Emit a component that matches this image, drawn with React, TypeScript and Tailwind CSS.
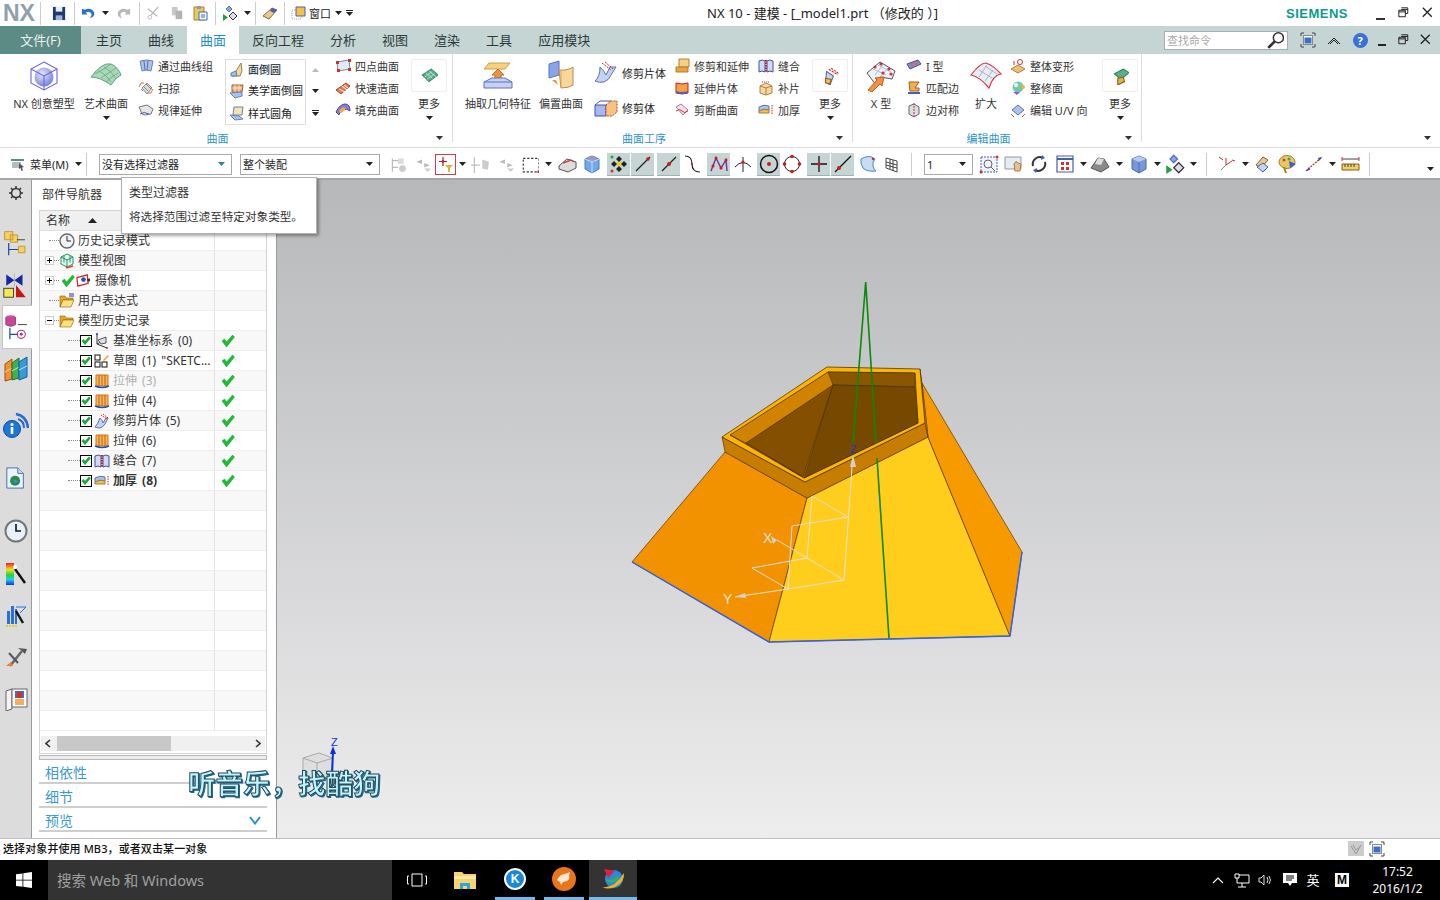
import React from "react";

const S = ({ s = 16, v = 16, children }: { s?: number; v?: number; children?: React.ReactNode }) => (
  <svg width={s} height={s} viewBox={`0 0 ${v} ${v}`} className="shrink-0 block">{children}</svg>
);
const Arrow = ({ c = "#222" }: { c?: string }) => (
  <svg width="7" height="4" viewBox="0 0 7 4" className="shrink-0 block"><path d="M0 0h7L3.5 4z" fill={c} /></svg>
);

/* ---------- icons ---------- */
const Creative = () => (
  <S s={32} v={32}>
    <defs><radialGradient id="sph" cx="40%" cy="35%" r="70%"><stop offset="0" stopColor="#e4e8fb" /><stop offset="1" stopColor="#6f7fd6" /></radialGradient></defs>
    <circle cx="16" cy="17" r="9.5" fill="url(#sph)" />
    <path d="M16 2l13 7v14l-13 7-13-7V9zM3 9l13 7 13-7M16 16v14" fill="none" stroke="#6f62e8" strokeWidth="1.1" />
  </S>
);
const Art = () => (
  <S s={32} v={32}>
    <path d="M1 17Q12 2 21 4q7 3 10 11-5 2-10 10Q10 17 1 17z" fill="#a8d8b8" stroke="#5f9f7f" />
    <path d="M8 11q7 2 13 11M14 7q7 3 12 12M5 14q10-5 16-10M11 18q9-6 15-10M16 22q6-6 12-9" fill="none" stroke="#5f9f7f" strokeWidth=".7" />
  </S>
);
const Sheets = () => (<S><path d="M2 3q7-2 13 0l-2 10q-5-2-9 0z" fill="#a9c4ec" stroke="#6b7fb8" /><path d="M6 3l1 9M10 2.5l-1 10" stroke="#5a6fb0" fill="none" /></S>);
const Sweep = () => (<S><path d="M4 8l5-5 5 5-5 6z" fill="#ddd" stroke="#888" /><path d="M5 6l5 5M8 4l5 5M3 9l2 2" stroke="#888" /><path d="M1 7l2-4 3 0M15 9l-2 4-3 0" stroke="#e8703a" fill="none" /></S>);
const Law = () => (<S><path d="M1 5l8-2 6 4-2 5-6 1-3-1z" fill="#e6e6e6" stroke="#777" /><path d="M2 12q4-3 9 0" stroke="#4060b0" fill="none" /></S>);
const Fold = () => (<S><path d="M12 1L7 9 3 14h8l2-5z" fill="#f3d9a0" stroke="#9a7f50" /><path d="M2 11l5-2 1 5H2z" fill="#9cc0ea" stroke="#6080b0" /></S>);
const Fold2 = () => (<S><path d="M3 2h11l-1 7H3z" fill="#f0a96a" stroke="#8a6a40" /><path d="M3 5h10M6 2v7M10 2v7" stroke="#fff" strokeWidth=".7" /><path d="M1 10l12-1 0 4-7 2z" fill="#a9c4ec" stroke="#6b7fb8" /></S>);
const Fold3 = () => (<S><path d="M5 2h9l-1 8H4z" fill="#f5e3b0" stroke="#6b7fb8" /><path d="M1 10l9 1 4 3-8 1z" fill="#a9c4ec" stroke="#6b7fb8" /></S>);
const Four = () => (<S><path d="M2 4l12-2 1 9-12 2z" fill="#dcecf8" stroke="#888" /><rect x="1" y="3" width="3" height="3" fill="#d03030" /><rect x="13" y="1" width="3" height="3" fill="#d03030" /><rect x="2" y="11" width="3" height="3" fill="#d03030" /><rect x="13" y="10" width="3" height="3" fill="#d03030" /></S>);
const Studio = () => (<S><path d="M1 10L11 3l4 3-9 8z" fill="#ea7a4a" stroke="#a04a2a" /><path d="M4 9l6 3M7 6l5 4M9 5l4 3" stroke="#fff" /></S>);
const FillS = () => (<S><path d="M1 10Q5 2 10 2t5 7q-3-3-7-1t-4 5z" fill="#8d7ad8" stroke="#504090" /><path d="M4 9q3-5 7-3l-2 3-3 2z" fill="#f0b040" /></S>);
const MoreG = () => (<S s={18}><path d="M2 7l8-5 6 5-8 6z" fill="#58b088" stroke="#3a8a68" /><path d="M5 5l6 5M8 3.5l6 5M4 9l7-5M6 11l7-5" stroke="#c8eadb" strokeWidth=".7" /></S>);
const Extract = () => (
  <S s={32} v={32}>
    <path d="M7 3h21l-5 6H2z" fill="#f8d080" stroke="#c8a050" />
    <path d="M16 9l6 6h-3v5h-6v-5h-3z" fill="#f09040" stroke="#c07020" />
    <path d="M2 22l8-4h13l7 4v6H2z" fill="#c4d2f4" stroke="#6070c0" /><path d="M2 22h28" stroke="#6070c0" />
  </S>
);
const Offset = () => (
  <S s={32} v={32}>
    <path d="M4 4l10-3v14l-10 3z" fill="#8aa4ea" stroke="#5a70c0" />
    <path d="M14 10h6q6-1 8-3v18q-4 3-12 3z" fill="#f8d898" stroke="#c08850" />
    <path d="M16 11v17" stroke="#e8a050" /><path d="M7 20l6 5-2-5z" fill="#f09040" />
  </S>
);
const TrimSheet = () => (<S s={24} v={24}><path d="M6 6q5 5 6 8l4-8 6 0-5 8q-2 5-7 7-5 1-9-1 5-4 5-14z" fill="#c4d2f4" stroke="#6070a8" /><path d="M8 2l9 7M11 1l8 7" stroke="#e02020" strokeDasharray="2 1" /></S>);
const TrimBody = () => (<S s={24} v={24}><path d="M1 9h11v11H1z" fill="#a8b8ec" stroke="#4050b8" /><path d="M12 9l5-4h6v11l-5 4h-6z" fill="#f4c480" stroke="#c04030" strokeDasharray="2 1" /><path d="M1 9l5-4h11" fill="none" stroke="#4050b8" /></S>);
const TrimExt = () => (<S><path d="M5 1h10v8H5z" fill="#f8d080" stroke="#b08030" /><path d="M2 9h12v5H2z" fill="#f0a040" stroke="#b08030" /></S>);
const ExtSheet = () => (<S><path d="M2 3q6 2 12 0v10q-6 2-12 0z" fill="#f8a040" stroke="#c02020" /><path d="M2 11q6 2 12 0v2q-6 2-12 0z" fill="#5060c0" /></S>);
const Divide = () => (<S><path d="M2 5l5-3 7 6-5 5z" fill="#f0e0f0" stroke="#a080b0" /><path d="M2 9q4-3 6 0t6 0" stroke="#e03030" fill="none" /></S>);
const Sew = () => (<S><path d="M1 3q4-2 6 0v11q-3-2-6 0zM15 3q-4-2-6 0v11q3-2 6 0z" fill="#cddcf4" stroke="#405098" /><path d="M8 2v12" stroke="#d02020" strokeDasharray="1.5 1" strokeWidth="2" /></S>);
const Patch = () => (<S><path d="M2 6l6-3 6 3v7l-6 2-6-2z" fill="#f8d8a0" stroke="#b08040" /><path d="M2 6l6 2 6-2M8 8v7" stroke="#b08040" fill="none" /><path d="M4 2l8 0" stroke="#d03030" strokeDasharray="1 1" /></S>);
const Thick = () => (<S><path d="M1 5q5-3 10-1v4q-5-2-10 1z" fill="#a9c4ec" stroke="#6070b0" /><path d="M1 9q5-3 10-1v3H1z" fill="#f0c050" stroke="#a08030" /><path d="M14 3v10" stroke="#d02020" strokeDasharray="1.5 1" /></S>);
const MoreTrim = () => (<S s={18}><path d="M5 4l6 4-3 8-4-3z" fill="#c4d2f4" stroke="#6070a8" /><path d="M7 2l8 5M9 1l7 5" stroke="#e02020" strokeDasharray="2 1" /><path d="M4 10l5 1-1 4-4-1z" fill="#f0c050" stroke="#906020" /></S>);
const XForm = () => (
  <S s={32} v={32}>
    <path d="M2 13l13-11 15 9-3 8-12-2-4 8z" fill="#eef2f6" stroke="#555" />
    <path d="M8 9l13 6M13 5l13 7M10 15l8-10M16 16l7-8" stroke="#a8c0d8" />
    <g fill="#d03040"><circle cx="10" cy="7" r="1.6" /><circle cx="16" cy="4" r="1.6" /><circle cx="24" cy="9" r="1.6" /><circle cx="18" cy="13" r="1.6" /><circle cx="26" cy="14" r="1.6" /></g>
    <path d="M3 30l9-10-2-2 9-1-2 9-2-2-8 8z" fill="#f09040" stroke="#c06020" />
  </S>
);
const IForm = () => (<S><path d="M1 6l11-4 3 4-11 5z" fill="#8090d8" stroke="#405098" /><rect x="5" y="5" width="2.5" height="3" fill="#e06060" /><rect x="9" y="4" width="2.5" height="3" fill="#e06060" /></S>);
const MatchE = () => (<S><path d="M3 2h10l-4 6 4 0v3H4z" fill="#f0b050" stroke="#a06020" /><path d="M2 13h12" stroke="#4060c0" strokeWidth="2" /></S>);
const Sym = () => (<S><path d="M3 4l5-2 5 3v7l-5 3-5-3z" fill="#ddd" stroke="#666" /><path d="M8 1v14" stroke="#b03060" strokeDasharray="2 1" /></S>);
const Enlarge = () => (
  <S s={32} v={32}>
    <path d="M1 15Q10 3 16 3q8 3 15 11-8 1-12 14Q10 17 1 15z" fill="#eaeef4" stroke="#d04050" strokeWidth="1.2" />
    <path d="M9 10l13 8M15 6l12 8M9 17l8-12M15 21l8-11" stroke="#a8b4c8" fill="none" />
  </S>
);
const Global = () => (<S><path d="M1 11l7-4 7 4-7 4z" fill="#f0c070" stroke="#b08040" /><circle cx="10" cy="4" r="2.5" fill="none" stroke="#d03030" /><path d="M4 7V3" stroke="#d03030" /></S>);
const Refit = () => (<S><circle cx="8" cy="7" r="5.5" fill="#70c8a8" /><circle cx="6" cy="5" r="2.2" fill="#e0f0e8" /><path d="M3 12l4 3 3-3z" fill="#a050c8" /><circle cx="13" cy="7" r="2" fill="#f0b030" /></S>);
const UV = () => (<S><path d="M2 8l6-5 6 5-6 5z" fill="#a9c4ec" stroke="#6070b0" /><path d="M1 12q2 2 3 3M15 12l-3 3" stroke="#d04040" /></S>);
const MoreE = () => (<S s={18}><path d="M3 6l8-4 5 3-7 6z" fill="#58b088" stroke="#3a8060" /><path d="M6 10l5-1 1 4-6 3z" fill="#e0b040" stroke="#906020" /></S>);

const Save = () => (<S s={15}><path d="M1 1h13v14H1z" fill="#1d3a72" /><path d="M4 1h7v5H4z" fill="#e8eef8" /><path d="M4 10h7v5H4z" fill="#9fb4d8" /></S>);
const Undo = ({ c = "#2a70c8" }: { c?: string }) => (<S s={15}><path d="M1 3v6h6L5 7q4-2 6 1 1 3-2 5 6-1 5-6-3-6-10-3z" fill={c} /></S>);
const Redo = () => (<S s={15}><g transform="matrix(-1 0 0 1 15 0)"><path d="M1 3v6h6L5 7q4-2 6 1 1 3-2 5 6-1 5-6-3-6-10-3z" fill="#b8b8b8" /></g></S>);
const Cut = () => (<S s={15}><path d="M13 1L5 10M2 3l10 8" stroke="#b8b8b8" strokeWidth="1.4" fill="none" /><circle cx="4" cy="12" r="2" fill="none" stroke="#b8b8b8" /></S>);
const Copy = () => (<S s={15}><path d="M2 1h6v9H2z" fill="#c8c8c8" /><path d="M6 5h7v9H6z" fill="#b4b4b4" /></S>);
const Paste = () => (<S s={16}><path d="M2 2h10v13H2z" fill="#e8c860" stroke="#a08830" /><path d="M5 1h4v3H5z" fill="#999" /><path d="M7 7h8v8H7z" fill="#f4f6fa" stroke="#4070b0" /><path d="M9 10h4M9 12h4" stroke="#4070b0" /></S>);
const Diamonds = ({ s = 16 }: { s?: number }) => (<S s={s}><path d="M7 1l3 3-3 3-3-3z" fill="#8aa4ea" stroke="#5070c0" /><path d="M11 7l4 4-4 4-4-4z" fill="#dde" stroke="#333" /><path d="M1 9l5 3.5-5 3.5z" fill="#20a040" /></S>);
const Crayon = () => (<S s={16}><path d="M1 11l9-8 5 2-8 9z" fill="#e8c890" stroke="#8a6a30" /><path d="M10 3l5 2-3 3-4-2z" fill="#5060b0" /></S>);
const Windowi = () => (<S s={16}><path d="M1 5h9v9H1z" fill="none" stroke="#aaa" strokeDasharray="1 1" /><path d="M5 2h9v9H5z" fill="#f8c040" stroke="#4060c0" /></S>);

const MenuI = () => (<S><path d="M1 3h13v2H1z" fill="#5a8a8a" /><path d="M2 7h9M2 9h7M2 11h7" stroke="#6a7a80" /><path d="M9 7l5 4-2 .5 1 3-1.5.5-1-3-1.500 1z" fill="#555" /></S>);
const Faded1 = () => (<S s={18}><path d="M3 3v12M3 5h5M3 11h5" stroke="#bbb" fill="none" /><rect x="8" y="3" width="5" height="5" fill="#ddd" /><circle cx="12" cy="12" r="3" fill="#ccc" /></S>);
const Faded2 = () => (<S s={18}><path d="M3 6l5-2v4zM15 9l-5-2v4z" fill="#bbb" /><path d="M10 12h6l-3 3z" fill="#ccc" /></S>);
const TypeFilter = () => (<div className="w-[21px] h-[21px] border border-[#d83a4a] flex items-center justify-center"><S s={17} v={17}><path d="M6 1v9M2 5.5h8" stroke="#a02030" strokeWidth="1.2" /><circle cx="6" cy="5.500" r="1.400" fill="#d02030" /><path d="M8 9h8l-3 3v4h-2v-4z" fill="#e8b030" /></S></div>);
const Faded3 = () => (<S s={18}><path d="M3 2v14M0 9h8" stroke="#bbb" /><path d="M10 4l6 2-1 7-5-1z" fill="#ccc" /></S>);
const Dashed = () => (<S s={18}><path d="M2 3h14v12H2z" fill="none" stroke="#333" strokeDasharray="2 1.500" /><circle cx="16" cy="15" r="1.500" fill="#c03030" /></S>);
const Eraser = () => (<S s={20} v={20}><path d="M1 12l8-7 9 3v6l-8 4-9-3z" fill="#ddd" stroke="#555" /><path d="M5 9l8-3 3 2" stroke="#d04040" fill="none" strokeWidth="1.500" /></S>);
const BlueCube = () => (<S s={20} v={20}><path d="M3 5l7-3 7 3v10l-7 4-7-4z" fill="#70a8e8" stroke="#4878c0" /><path d="M3 5l7 3 7-3M10 8v11" stroke="#c8e0f8" fill="none" /><path d="M6 3h8l-3 4z" fill="none" stroke="#d88" /></S>);
const Snap1 = () => (<S s={20} v={20}><path d="M10 2l3 3-3 3-3-3zM10 12l3 3-3 3-3-3zM5 7l3 3-3 3-3-3zM15 7l3 3-3 3-3-3z" fill="#222" /><rect x="8" y="8" width="4" height="4" fill="#f0d020" /><circle cx="3" cy="3" r="1.500" fill="#20a040" /><circle cx="3" cy="17" r="1.500" fill="#d03030" /></S>);
const Line = () => (<S s={20} v={20}><path d="M3 17L17 3" stroke="#222" strokeWidth="1.200" /><circle cx="15" cy="5" r="1.800" fill="#d01818" /></S>);
const Mid = () => (<S s={20} v={20}><path d="M3 17L17 3" stroke="#222" strokeWidth="1.200" /><circle cx="10" cy="10" r="2" fill="#d01818" /></S>);
const Curve = () => (<S s={20} v={20}><path d="M3 2q7 0 7 8t8 8" stroke="#222" fill="none" strokeWidth="1.200" /><circle cx="10" cy="10" r="1" fill="#d01818" /></S>);
const Zig = () => (<S s={20} v={20}><path d="M2 17L7 4l5 10 5-8 1 11" stroke="#7030a0" fill="none" strokeWidth="1.400" /><g fill="#d01818"><circle cx="7" cy="4" r="1.500" /><circle cx="12" cy="14" r="1.500" /><circle cx="17" cy="6" r="1.500" /><circle cx="4" cy="12" r="1.500" /></g></S>);
const Arc = () => (<S s={20} v={20}><path d="M2 13q8-9 16 0M10 3v15" stroke="#222" fill="none" /><circle cx="10" cy="8" r="1.600" fill="#d01818" /></S>);
const Center = () => (<S s={20} v={20}><circle cx="10" cy="10" r="8.500" fill="none" stroke="#111" strokeWidth="1.500" /><circle cx="10" cy="10" r="2" fill="#d01818" /></S>);
const Quad = () => (<S s={20} v={20}><circle cx="10" cy="10" r="7.500" fill="none" stroke="#222" /><g fill="#d01818"><circle cx="10" cy="2.500" r="1.800" /><circle cx="10" cy="17.500" r="1.800" /><circle cx="2.500" cy="10" r="1.800" /><circle cx="17.500" cy="10" r="1.800" /></g></S>);
const Cross = () => (<S s={20} v={20}><path d="M10 2v16M2 10h16" stroke="#111" strokeWidth="1.300" /><circle cx="10" cy="10" r="1.800" fill="#d01818" /></S>);
const Tan = () => (<S s={20} v={20}><path d="M2 18L18 2" stroke="#111" strokeWidth="1.300" /><circle cx="6" cy="14" r="2" fill="#d01818" /></S>);
const Surf = () => (<S s={20} v={20}><path d="M3 5q8-5 14 0-3 3-2 7t3 5q-9 1-13-3-3-5-2-9z" fill="#c8dcf4" stroke="#5080c0" /><circle cx="15" cy="5" r="1.200" fill="#d03030" /></S>);
const Grid3 = () => (<S s={20} v={20}><path d="M4 4l11 3v11L4 14z" fill="#fff" stroke="#444" /><path d="M4 8l11 3M4 11l11 3M8 5v10M11 6v11" stroke="#444" /></S>);
const Fit = () => (<S s={20} v={20}><path d="M2 3h16v15H2z" fill="#f0f4fa" stroke="#4060b0" strokeDasharray="2 1" /><circle cx="9" cy="10" r="4" fill="none" stroke="#666" /><path d="M12 13l4 4" stroke="#666" /><circle cx="18" cy="3" r="1.500" fill="#d03030" /><circle cx="2" cy="18" r="1.500" fill="#d03030" /></S>);
const Pan = () => (<S s={20} v={20}><path d="M1 3h16v12H1z" fill="#e4ecf6" stroke="#999" /><path d="M10 10q2-4 4-1l3 1-1 7h-5z" fill="#e8c090" stroke="#a08050" /></S>);
const Rotate = () => (<S s={20} v={20}><path d="M4 12a7 7 0 0 1 10-8M16 8a7 7 0 0 1-10 8" stroke="#333" strokeWidth="2" fill="none" /><path d="M13 1l3 3-4 2z" fill="#4060c0" /><path d="M7 19l-3-3 4-2z" fill="#4060c0" /></S>);
const Views = () => (<S s={20} v={20}><path d="M2 2h16v16H2z" fill="#fff" stroke="#4060b0" strokeWidth="1.200" /><path d="M2 5h16" stroke="#4060b0" strokeWidth="2" /><g fill="#d03030"><rect x="6" y="8" width="3" height="3" /><rect x="11" y="8" width="3" height="3" /><rect x="6" y="13" width="3" height="3" /><rect x="11" y="13" width="3" height="3" /></g></S>);
const Shade = () => (<S s={20} v={20}><path d="M1 14l7-10 6 1 5 8-8 5z" fill="#8a8a8a" stroke="#555" /><path d="M8 4l6 1-3 6-6-1z" fill="#ddd" /></S>);
const Cube = () => (<S s={20} v={20}><path d="M3 5l7-3 7 3v10l-7 4-7-4z" fill="#7898d8" stroke="#4868b0" /><path d="M3 5l7 3 7-3v0l-7-3z" fill="#b4c8f0" /><path d="M10 8v11" stroke="#5070b8" /></S>);
const Triad = () => (<S s={20} v={20}><path d="M9 11l6-4M9 11V4" stroke="#c03030" fill="none" /><path d="M9 11l-5 5" stroke="#888" /><path d="M2 3l4 3M15 6l3 1" stroke="#c03030" /></S>);
const Band = () => (<S s={20} v={20}><path d="M2 11l7-8 5 3-7 8z" fill="#e8c890" stroke="#806030" /><path d="M3 13l6 5 5-5-5-4z" fill="#c8d4ec" stroke="#4060a0" /></S>);
const Palette = () => (<S s={20} v={20}><ellipse cx="9" cy="8" rx="8" ry="6.500" fill="#e8c860" stroke="#a08030" /><circle cx="6" cy="6" r="1.500" fill="#d04040" /><circle cx="11" cy="5" r="1.500" fill="#40a060" /><path d="M11 7l7 3-6 4z" fill="#4060c0" /><path d="M6 13l2 6" stroke="#a08030" strokeWidth="2" /></S>);
const Measure = () => (<S s={20} v={20}><path d="M2 17L18 3" stroke="#d03030" strokeWidth="1.400" strokeDasharray="2 1" /><path d="M2 17l4-1-1-3zM18 3l-4 1 1 3z" fill="#3050c0" /></S>);
const Ruler = () => (<S s={20} v={20}><path d="M2 10h17v6H2z" fill="#f4d060" stroke="#806020" /><path d="M5 10v3M8 10v3M11 10v3M14 10v3M2 5h17" stroke="#404040" /><path d="M2 3v4M19 3v4" stroke="#d03030" /></S>);
const Magnify = () => (<S s={18}><circle cx="11" cy="6" r="4.500" fill="#fff" stroke="#333" strokeWidth="1.300" /><path d="M8 9l-6 6" stroke="#333" strokeWidth="2.400" /></S>);
const FullWin = ({ c = "#444" }: { c?: string }) => (<S s={16}><path d="M1 4V1h3M12 1h3v3M15 12v3h-3M4 15H1v-3" stroke={c} fill="none" /><rect x="3.500" y="3.500" width="9" height="9" fill="#fff" stroke="#888" /><rect x="4.500" y="5.500" width="7" height="6" fill="#3a70c8" /></S>);
const MinI = () => <div className="w-[11px] h-[2px] bg-[#222] mt-[10px]" />;
const MaxI = () => (<S s={13}><path d="M4 1h8v7H9M1 4h8v8H1zM1 6h8M4 3h8" stroke="#222" fill="none" strokeWidth="1.200" /></S>);
const CloseI = () => (<S s={13}><path d="M1 1l11 11M12 1L1 12" stroke="#222" strokeWidth="1.600" /></S>);

const Gear = () => (<S s={16}><circle cx="8" cy="8" r="4.500" fill="none" stroke="#333" strokeWidth="1.500" /><path d="M8 1v2M8 13v2M1 8h2M13 8h2M3 3l1.500 1.500M11.500 11.500L13 13M13 3l-1.500 1.500M4.500 11.500L3 13" stroke="#333" strokeWidth="1.500" /></S>);
const AsmTree = () => (<S s={26} v={32}><path d="M2 2h10v10H2zM9 6h9v9H9z" fill="#f8d060" stroke="#b89020" /><path d="M7 16v15M7 24h12" stroke="#1848b8" strokeWidth="1.500" /><path d="M17 12h10" stroke="#222" /><path d="M19 20h8v8h-8z" fill="#f8d060" stroke="#b89020" /></S>);
const Constr = () => (<S s={26} v={32}><path d="M4 3l10 7L4 17zM24 3l-10 7 10 7z" fill="#1428a0" /><path d="M14 2v16" stroke="#aaa" /><rect x="1" y="20" width="12" height="11" fill="#f4e850" stroke="#222" /><path d="M16 31V16l12 15z" fill="#c81414" /></S>);
const PartN = () => (<S s={26} v={32}><ellipse cx="7" cy="4" rx="6" ry="2.500" fill="#d050a0" /><path d="M1 4v9q6 4 12 0V4" fill="#c84898" stroke="#803060" /><path d="M6 17v14M6 25h10" stroke="#1848b8" strokeWidth="1.500" /><path d="M16 13h11" stroke="#222" /><circle cx="20" cy="25" r="5" fill="none" stroke="#b03080" strokeWidth="1.300" /><circle cx="20" cy="25" r="1.800" fill="#b03080" /></S>);
const Books = () => (<S s={26} v={26}><path d="M2 8l7-5v20l-7 2z" fill="#f09030" stroke="#a05010" /><path d="M2 16l7-4" stroke="#ffd090" /><path d="M9 7l7-5v20l-7 2z" fill="#40b050" stroke="#207030" /><path d="M9 15l7-4" stroke="#c0f0c0" /><path d="M16 6l8-5v20l-8 3z" fill="#3a9ad8" stroke="#1060a0" /><path d="M16 14l8-4" stroke="#c0e4ff" /></S>);
const Info = () => (<S s={26} v={26}><path d="M13 2q11 2 12 14" stroke="#2a6ad0" strokeWidth="2.500" fill="none" /><path d="M15 7q6 2 6 9" stroke="#2a6ad0" strokeWidth="2" fill="none" /><circle cx="9" cy="17" r="8.500" fill="#1a78d8" stroke="#0a4ca0" /><rect x="7.700" y="15" width="2.600" height="7" fill="#fff" /><circle cx="9" cy="12.500" r="1.600" fill="#fff" /></S>);
const Doc = () => (<S s={22} v={24}><path d="M2 1h12l6 6v16H2z" fill="#eef4fc" stroke="#3a68b0" /><path d="M14 1v6h6" fill="#cfe0f4" stroke="#3a68b0" /><circle cx="11" cy="15" r="5.500" fill="#2a8a50" /><path d="M8 12q3 4 6 2 0 3-3 4z" fill="#3a90d8" /></S>);
const Clock = () => (<S s={24} v={24}><circle cx="12" cy="12" r="10.500" fill="#e8f0fa" stroke="#777" strokeWidth="2" /><path d="M12 5v7h5" stroke="#111" strokeWidth="1.600" fill="none" /></S>);
const Rainbow = () => (
  <S s={24} v={24}>
    <defs><linearGradient id="rb" x1="0" y1="0" x2="0" y2="1"><stop offset="0" stopColor="#f02020" /><stop offset=".3" stopColor="#f0e020" /><stop offset=".55" stopColor="#20d040" /><stop offset=".75" stopColor="#20d0e0" /><stop offset="1" stopColor="#1830e0" /></linearGradient></defs>
    <rect x="2" y="1" width="8" height="22" fill="url(#rb)" /><path d="M11 7l10 14" stroke="#111" strokeWidth="2.400" /><circle cx="11" cy="5" r="2" fill="#fff" />
  </S>
);
const Bars = () => (<S s={24} v={24}><path d="M3 7h3v13H3zM7 2h3v18H7zM11 5h2v15h-2z" fill="#2a70d8" /><path d="M12 3h10l-6 6" stroke="#2a70d8" fill="none" /><path d="M12 7l7 12" stroke="#111" strokeWidth="2.400" /><path d="M2 22h12" stroke="#e8d020" strokeWidth="2" strokeDasharray="2 1" /></S>);
const Tools = () => (<S s={24} v={24}><path d="M6 21L18 6" stroke="#666" strokeWidth="2.500" /><path d="M14 3l9 1-2 5-3-3z" fill="#555" /><path d="M5 8l9 10" stroke="#556" strokeWidth="2" /><path d="M2 21l5-4 2 4z" fill="#f08020" /></S>);
const Door = () => (<S s={24} v={24}><path d="M2 4l6-2v20l-6 2z" fill="#f4f4f4" stroke="#666" /><rect x="8" y="2" width="15" height="18" fill="#fff" stroke="#666" /><path d="M11 4h9v7H11z" fill="#3a70d8" /><path d="M13 5h5v6h-5z" fill="#d83020" /><path d="M11 12h9v6H11z" fill="#f0b060" /></S>);

const Tick = () => (<S s={14} v={14}><path d="M1 7l2.500-2L5.500 8 11.500 1 13.500 3 5.500 13z" fill="#18c030" stroke="#0e8a20" strokeWidth=".4" /></S>);
const Cb = () => (<div className="w-[12px] h-[12px] border border-black bg-white flex items-center justify-center shrink-0"><svg width="10" height="10" viewBox="0 0 10 10"><path d="M.5 5L2.500 3 4 5 8 .5 9.800 2.200 4 9z" fill="#18a838" /></svg></div>);
const Exp = ({ m }: { m?: boolean }) => (<div className="w-[9px] h-[9px] border border-[#ccc] bg-white flex items-center justify-center shrink-0 relative"><div className="w-[5px] h-px bg-black" />{!m && <div className="absolute w-px h-[5px] bg-black" />}</div>);
const TClock = () => (<S><circle cx="8" cy="8" r="7" fill="#f0f4f8" stroke="#666" strokeWidth="1.400" /><path d="M8 3v5h4" stroke="#222" fill="none" /></S>);
const TView = () => (<S><path d="M8 1l6 3v7l-6 3-6-3V4z" fill="#e8f8f0" stroke="#1a9a60" /><path d="M2 4l6 3 6-3M8 7v7M5 2.500v7M11 2.500v7" stroke="#1a9a60" fill="none" /><path d="M7 15l7-2" stroke="#e04020" strokeWidth="1.500" /></S>);
const TCam = () => (<S s={15}><path d="M1 5l11-3 1 9-11 3z" fill="#fff" stroke="#d82020" strokeWidth="1.300" /><circle cx="8" cy="7" r="2.500" fill="#3050b0" /><path d="M12 6h3v3h-3z" fill="#333" /></S>);
const FolderO = ({ bar }: { bar?: boolean }) => (<S><path d="M1 5V3h5l1 2h7v2H4L1 14z" fill="#e8a820" stroke="#906010" strokeWidth=".6" /><path d="M1 14l3-7h11l-3 7z" fill="#fbe080" stroke="#906010" strokeWidth=".6" />{bar && <path d="M10 1h5M10 3h5" stroke="#3030a0" />}</S>);
const TDatum = () => (<S><path d="M3 1v10l9-5M3 11l10 4" stroke="#333" fill="none" /><path d="M4 7l8-3v6l-5 1z" fill="#dde" stroke="#555" /><circle cx="3" cy="1" r="1" fill="#2040c0" /><circle cx="13" cy="15" r="1" fill="#c03030" /></S>);
const TSketch = () => (<S><rect x="1" y="2" width="5" height="5" fill="none" stroke="#111" /><rect x="1" y="9" width="5" height="5" fill="none" stroke="#111" /><rect x="8" y="9" width="5" height="5" fill="none" stroke="#111" /><path d="M9 7l5-5 1 1-5 5z" fill="#e8a030" /></S>);
const TExtrude = () => (<S><path d="M2 2h12v11H2z" fill="#f6b858" stroke="#d07010" /><path d="M5 2v11M8 2v11M11 2v11" stroke="#c06010" /><path d="M1 13q7 3 14 0" stroke="#2050c0" strokeWidth="1.400" fill="none" /></S>);
const TTrim = () => (<S><path d="M6 5q3 3 3 5l3-5 2 0-3 6q-2 3-5 4-3 0-5-1 3-3 5-9z" fill="#c4d2f4" stroke="#6070a8" /><path d="M7 2l6 4M9 1l5 4" stroke="#e02020" strokeDasharray="1.500 1" /></S>);

/* ---------- ribbon parts ---------- */
const Small = ({ i, t }: { i: React.ReactNode; t: string }) => (
  <div className="h-[22px] flex items-center gap-[4px] text-[11px] leading-none whitespace-nowrap text-[#333]">{i}<span>{t}</span></div>
);
const Col = ({ c, children }: { c: string; children?: React.ReactNode }) => <div className={`flex flex-col shrink-0 ${c}`}>{children}</div>;
const Big = ({ c, i, t, a }: { c: string; i: React.ReactNode; t: string; a?: boolean }) => (
  <div className={`flex flex-col items-center shrink-0 pt-[5px] ${c}`}>
    <div className="h-[32px] flex items-center">{i}</div>
    <div className="mt-[5px] text-[11px] leading-[14px] whitespace-nowrap text-[#333]">{t}</div>
    {a && <div className="mt-[5px]"><Arrow /></div>}
  </div>
);
const More = ({ c, i }: { c: string; i: React.ReactNode }) => (
  <div className={`w-[36px] flex flex-col items-center shrink-0 pt-[4px] ${c}`}>
    <div className="w-[36px] h-[33px] border border-[#eee] rounded-[2px] flex items-center justify-center">{i}</div>
    <div className="mt-[5px] text-[11px] leading-[14px] text-[#333]">更多</div>
    <div className="mt-[5px]"><Arrow /></div>
  </div>
);
const Group = ({ c, label, children, last }: { c: string; label: string; children?: React.ReactNode; last?: boolean }) => (
  <div className={`shrink-0 flex flex-col pt-px relative ${last ? "" : "border-r border-[#ddd] mb-[5px]"} ${c}`}>
    <div className="flex h-[76px] shrink-0">{children}</div>
    <div className="text-center pr-[17px] text-[11px] leading-[15px] text-[#2e93c8]">{label}</div>
    <div className={`absolute right-[9px] ${last ? "bottom-[7px]" : "bottom-[2px]"}`}><Arrow c="#333" /></div>
  </div>
);

/* ---------- toolbar parts ---------- */
const Cell = ({ c, on, children }: { c: string; on?: boolean; children?: React.ReactNode }) => (
  <div className={`h-[23px] flex items-center justify-center shrink-0 ${on ? "bg-[#c5d5d3] border-b border-[#9fb4b2]" : ""} ${c}`}>{children}</div>
);
const Sep = ({ c }: { c: string }) => <div className={`w-px h-[23px] bg-[#ccc] shrink-0 ${c}`} />;
const Sel = ({ c, t, ac = "#222" }: { c: string; t: string; ac?: string }) => (
  <div className={`h-[21px] border border-[#aaa] flex items-center justify-between pl-[2px] pr-[6px] text-[11px] leading-none text-[#222] shrink-0 ${c}`}>
    <span>{t}</span><Arrow c={ac} />
  </div>
);

/* ---------- tree ---------- */
type Row = { lvl: 0 | 1; exp?: "p" | "m"; tick?: boolean; i?: React.ReactNode; t?: string; done?: boolean; gray?: boolean; bold?: boolean };
const rows: Row[] = [
  { lvl: 0, i: <TClock />, t: "历史记录模式" },
  { lvl: 0, exp: "p", i: <TView />, t: "模型视图" },
  { lvl: 0, exp: "p", tick: true, i: <TCam />, t: "摄像机" },
  { lvl: 0, i: <FolderO bar />, t: "用户表达式" },
  { lvl: 0, exp: "m", i: <FolderO />, t: "模型历史记录" },
  { lvl: 1, i: <TDatum />, t: "基准坐标系 (0)", done: true },
  { lvl: 1, i: <TSketch />, t: '草图 (1) "SKETC...', done: true },
  { lvl: 1, i: <TExtrude />, t: "拉伸 (3)", done: true, gray: true },
  { lvl: 1, i: <TExtrude />, t: "拉伸 (4)", done: true },
  { lvl: 1, i: <TTrim />, t: "修剪片体 (5)", done: true },
  { lvl: 1, i: <TExtrude />, t: "拉伸 (6)", done: true },
  { lvl: 1, i: <Sew />, t: "缝合 (7)", done: true },
  { lvl: 1, i: <Thick />, t: "加厚 (8)", done: true, bold: true },
  ...Array.from({ length: 12 }, () => ({ lvl: 0 as const })),
];
const TreeRow = ({ r, n }: { r: Row; n: number }) => (
  <div className={`h-[20px] flex shrink-0 border-b border-[#eeeeee] ${n % 2 ? "bg-[#f8f8f8]" : "bg-white"}`}>
    <div className="w-[175px] shrink-0 border-r border-[#e4e4e4] flex items-center relative text-[12px] leading-none whitespace-nowrap [word-spacing:2px]">
      {r.t && r.lvl === 0 && (
        <>
          <div className="absolute left-[9px] w-[10px] border-t border-dotted border-[#888]" />
          <div className="w-[5px] shrink-0" />
          <div className="w-[9px] shrink-0 relative z-10">{r.exp && <Exp m={r.exp === "m"} />}</div>
          {r.tick ? <div className="ml-[7px] mr-[1px]"><Tick /></div> : <div className="w-[5px]" />}
          {r.i}
          <span className={`text-[#333] ${r.tick ? "ml-[4px]" : "ml-[3px]"}`}>{r.t}</span>
        </>
      )}
      {r.t && r.lvl === 1 && (
        <>
          <div className="absolute left-[28px] w-[12px] border-t border-dotted border-[#888]" />
          <div className="w-[40px] shrink-0" />
          <Cb />
          <div className="ml-[2px]">{r.i}</div>
          <span className={`ml-[3px] ${r.gray ? "text-[#b0b0b0]" : "text-[#333]"} ${r.bold ? "font-bold" : ""}`}>{r.t}</span>
        </>
      )}
    </div>
    <div className="flex-1 flex items-center pl-[6px]">{r.done && <Tick />}</div>
  </div>
);

/* ---------- 3D view ---------- */
const Model = () => (
  <svg viewBox="277 180 1163 658" className="block w-full h-full">
    <polygon points="632,562 725,452 807,498 769,642" fill="#f39200" stroke="#5a3a00" strokeWidth=".7" />
    <polygon points="807,498 928,437 1010,636 769,642" fill="#ffcd1c" stroke="#5a3a00" strokeWidth=".7" />
    <polygon points="922,383 1022,552 1010,636 928,437" fill="#f79a00" stroke="#5a3a00" strokeWidth=".7" />
    <polygon points="722,437 805,482 925,423 928,437 807,498 725,452" fill="#c77e00" stroke="#4a3000" strokeWidth=".6" />
    <polygon points="920,369 925,423 928,437 922,383" fill="#d48a00" stroke="#4a3000" strokeWidth=".5" />
    <polygon points="722,437 827,367 920,369 925,423 805,482" fill="#ffb400" stroke="#3a2800" strokeWidth=".7" />
    <polygon points="730,435 828,372 915,373 918,423 804,478" fill="#d08300" stroke="#3a2800" strokeWidth=".7" />
    <polygon points="828,372 915,373 915,387 833,385" fill="#8a5600" stroke="#3a2800" strokeWidth=".5" />
    <polygon points="746,443 833,385 803,477" fill="#845000" stroke="#3a2800" strokeWidth=".6" />
    <polygon points="833,385 915,387 918,423 804,478" fill="#774900" stroke="#3a2800" strokeWidth=".6" />
    <path d="M730 435L746 443L803 477" stroke="#3a2800" strokeWidth=".5" fill="none" />
    <path d="M853 443L865.700 282L876 443M877 458L889 638" stroke="#0a8a0a" strokeWidth="1.600" fill="none" />
    <path d="M632 562L769 642L1010 636L1022 552" stroke="#3060f0" strokeWidth="1.400" fill="none" />
    <g stroke="#e2e0da" strokeWidth="1" fill="none">
      <path d="M812 496L848 517L792 526L788 589L844 580L852 467M812 496L807 558M752 568L807 558L844 580M752 568L788 589M807 558L777 540M788 589L735 597" />
    </g>
    <path d="M853 455l-3 12h6zM777 540l-6 -4 2 8zM735 597l10-4 1 5z" fill="#d0d0d0" />
    <text x="763" y="543" fontSize="14" fill="#e4e2da" fontFamily="Liberation Sans">X</text>
    <text x="723" y="604" fontSize="14" fill="#e4e2da" fontFamily="Liberation Sans">Y</text>
    <text x="850" y="453" fontSize="11" fill="#2030e0" fontFamily="Liberation Sans">Z</text>
    <path d="M303 758l16-5 14 5v18l-14 3-16-3z" fill="#d8d8d8" fillOpacity=".6" stroke="#aaa" />
    <path d="M303 758l14 5 16-5M317 763v15" stroke="#aaa" fill="none" />
    <path d="M332 772L333 752" stroke="#1030e0" strokeWidth="2" />
    <path d="M333 746l-3 8h6z" fill="#1030e0" />
    <path d="M318 778l16 1" stroke="#20a030" strokeWidth="1.400" />
    <text x="331" y="746" fontSize="11" fill="#1030e0" fontFamily="Liberation Sans">Z</text>
  </svg>
);

export default function App() {
  return (
    <div className="w-[1440px] h-[900px] overflow-hidden flex flex-col bg-white relative [font-family:'Noto_Sans','Noto_Sans_CJK_SC',sans-serif] text-[#222]">
      {/* title bar */}
      <div className="h-[26px] flex items-center shrink-0">
        <div className="w-[707px] shrink-0 flex items-center">
          <span className="w-[45px] pl-[3px] text-[23px] font-bold leading-none text-[#8fa0ac] [font-family:'Liberation_Sans',sans-serif]">NX</span>
          <Sep c="h-[18px] -ml-[5px] mr-[11px]" />
          <Save />
          <Sep c="h-[18px] ml-[7px] mr-[6px]" />
          <Undo />
          <div className="ml-[6px] mr-[8px]"><Arrow /></div>
          <Redo />
          <Sep c="h-[18px] ml-[7px] mr-[6px]" />
          <Cut />
          <div className="ml-[9px]"><Copy /></div>
          <div className="ml-[7px]"><Paste /></div>
          <Sep c="h-[18px] ml-[7px] mr-[6px]" />
          <Diamonds />
          <div className="ml-[6px]"><Arrow /></div>
          <Sep c="h-[18px] ml-[4px] mr-[6px]" />
          <Crayon />
          <Sep c="h-[18px] ml-[6px] mr-[6px]" />
          <Windowi />
          <span className="ml-[2px] text-[11px] leading-none">窗口</span>
          <div className="ml-[4px]"><Arrow /></div>
          <div className="ml-[4px]"><svg width="7" height="6" viewBox="0 0 7 6" className="block"><path d="M0 0h7v1H0zM0 2h7L3.500 6z" fill="#222" /></svg></div>
        </div>
        <div className="text-[13px] leading-none whitespace-nowrap text-[#222]">NX 10 - 建模 - [_model1.prt （修改的 ）]</div>
        <div className="ml-auto flex items-center">
          <span className="text-[13px] font-bold tracking-[0.5px] leading-none text-[#0d9a8c] [font-family:'Liberation_Sans',sans-serif] mr-[20px]">SIEMENS</span>
          <div className="w-[24px] flex justify-center h-[13px]"><div className="w-[9px] h-[2px] bg-[#333] mt-[11px]" /></div>
          <div className="w-[24px] flex justify-center"><MaxI /></div>
          <div className="w-[24px] flex justify-center"><CloseI /></div>
        </div>
      </div>

      {/* tab bar */}
      <div className="h-[28px] bg-[#c5d5d3] flex items-stretch shrink-0">
        <div className="w-[81px] bg-[#5c8a84] text-[#e8f2f0] text-[13px] leading-none flex items-center justify-center mr-[2px]">文件(F)</div>
        {["主页", "曲线", "曲面", "反向工程", "分析", "视图", "渲染", "工具", "应用模块"].map((t) => (
          <div key={t} className={`px-[13px] text-[13px] leading-none flex items-center ${t === "曲面" ? "bg-white text-[#2390c8]" : "text-[#2c3a3a]"}`}>{t}</div>
        ))}
        <div className="ml-auto flex items-center pr-[10px]">
          <div className="w-[124px] h-[19px] bg-white border border-[#aab] flex items-center justify-between pl-[2px] pr-[3px] text-[11px] leading-none text-[#aaa]">
            <span>查找命令</span><Magnify />
          </div>
          <div className="w-[38px] flex justify-center pl-[2px]"><FullWin /></div>
          <div className="w-[16px] flex justify-center"><svg width="14" height="9" viewBox="0 0 14 9" className="block"><path d="M1 8l6-6 6 6M3 8l4-4 4 4" stroke="#222" fill="none" /></svg></div>
          <div className="w-[36px] flex justify-center"><div className="w-[15px] h-[15px] rounded-full bg-[#3a70d8] text-white text-[11px] font-bold leading-[15px] text-center">?</div></div>
          <div className="w-[8px] flex justify-center h-[13px]"><MinI /></div>
          <div className="w-[36px] flex justify-center"><MaxI /></div>
          <div className="w-[8px] flex justify-center"><CloseI /></div>
        </div>
      </div>

      {/* ribbon */}
      <div className="h-[94px] shrink-0 flex border-b border-[#dcdcdc] relative">
        <Group c="w-[453px]" label="曲面">
          <Big c="w-[88px]" i={<Creative />} t="NX 创意塑型" />
          <Big c="w-[36px]" i={<Art />} t="艺术曲面" a />
          <Col c="ml-[14px] w-[87px]"><Small i={<Sheets />} t="通过曲线组" /><Small i={<Sweep />} t="扫掠" /><Small i={<Law />} t="规律延伸" /></Col>
          <div className="mt-[4px] h-[66px] w-[81px] shrink-0 border border-[#ddd] pl-[3px] flex flex-col">
            <div className="h-[19px] flex items-center gap-[3px] text-[11px] leading-none whitespace-nowrap"><Fold /><span className="bg-[#e6f2fb]">面倒圆</span></div>
            <div className="h-[23px] flex items-center gap-[3px] text-[11px] leading-none whitespace-nowrap"><Fold2 /><span>美学面倒圆</span></div>
            <div className="h-[22px] flex items-center gap-[3px] text-[11px] leading-none whitespace-nowrap"><Fold3 /><span>样式圆角</span></div>
          </div>
          <div className="w-[18px] mt-[4px] h-[66px] flex flex-col items-center justify-around pl-[1px] shrink-0">
            <svg width="7" height="4" viewBox="0 0 7 4" className="block"><path d="M0 4h7L3.500 0z" fill="#bbb" /></svg>
            <Arrow />
            <svg width="7" height="6" viewBox="0 0 7 6" className="block"><path d="M0 0h7v1H0zM0 2h7L3.500 6z" fill="#222" /></svg>
          </div>
          <Col c="ml-[11px] w-[76px]"><Small i={<Four />} t="四点曲面" /><Small i={<Studio />} t="快速造面" /><Small i={<FillS />} t="填充曲面" /></Col>
          <More c="" i={<MoreG />} />
        </Group>
        <Group c="w-[400px]" label="曲面工序">
          <Big c="w-[66px] ml-[12px]" i={<Extract />} t="抽取几何特征" />
          <Big c="w-[44px] ml-[8px]" i={<Offset />} t="偏置曲面" />
          <Col c="ml-[11px] w-[71px]">
            <div className="h-[36px] flex items-center gap-[4px] text-[11px] leading-none whitespace-nowrap"><TrimSheet /><span>修剪片体</span></div>
            <div className="h-[34px] flex items-center gap-[4px] text-[11px] leading-none whitespace-nowrap"><TrimBody /><span>修剪体</span></div>
          </Col>
          <Col c="ml-[9px] w-[84px]"><Small i={<TrimExt />} t="修剪和延伸" /><Small i={<ExtSheet />} t="延伸片体" /><Small i={<Divide />} t="剪断曲面" /></Col>
          <Col c="w-[54px]"><Small i={<Sew />} t="缝合" /><Small i={<Patch />} t="补片" /><Small i={<Thick />} t="加厚" /></Col>
          <More c="" i={<MoreTrim />} />
        </Group>
        <Group c="w-[289px]" label="编辑曲面">
          <Big c="w-[32px] ml-[12px]" i={<XForm />} t="X 型" />
          <Col c="ml-[9px] w-[64px]"><Small i={<IForm />} t="I 型" /><Small i={<MatchE />} t="匹配边" /><Small i={<Sym />} t="边对称" /></Col>
          <Big c="w-[32px]" i={<Enlarge />} t="扩大" />
          <Col c="ml-[8px] w-[92px]"><Small i={<Global />} t="整体变形" /><Small i={<Refit />} t="整修面" /><Small i={<UV />} t="编辑 U/V 向" /></Col>
          <More c="" i={<MoreE />} />
        </Group>
        <Group c="flex-1" label="" last />
      </div>

      {/* toolbar */}
      <div className="h-[32px] pt-[2px] shrink-0 flex items-center border-b-2 border-[#a6a6a6]">
        <div className="pl-[10px] w-[83px] flex items-center gap-[4px] text-[11px] leading-none shrink-0 whitespace-nowrap"><MenuI /><span>菜单(M)</span><div className="ml-[2px]"><Arrow /></div></div>
        <Sep c="ml-[3px] mr-[12px]" />
        <Sel c="w-[133px]" t="没有选择过滤器" ac="#2a80b0" />
        <Sel c="w-[140px] ml-[8px]" t="整个装配" />
        <Cell c="w-[24px] ml-[6px]"><Faded1 /></Cell>
        <Cell c="w-[24px]"><Faded2 /></Cell>
        <Cell c="w-[23px]"><TypeFilter /></Cell>
        <Cell c="w-[11px]"><Arrow /></Cell>
        <Cell c="w-[24px]"><Faded3 /></Cell>
        <Cell c="w-[26px]"><Faded2 /></Cell>
        <Cell c="w-[24px]"><Dashed /></Cell>
        <Cell c="w-[12px]"><Arrow /></Cell>
        <Cell c="w-[24px] ml-[2px]"><Eraser /></Cell>
        <Cell c="w-[24px]"><BlueCube /></Cell>
        <Cell c="w-[23px] ml-[3px]" on><Snap1 /></Cell>
        <Cell c="w-[23px] ml-px" on><Line /></Cell>
        <Cell c="w-[23px] ml-[3px]" on><Mid /></Cell>
        <Cell c="w-[24px]"><Curve /></Cell>
        <Cell c="w-[23px] ml-[3px]" on><Zig /></Cell>
        <Cell c="w-[24px] ml-px"><Arc /></Cell>
        <Cell c="w-[23px] ml-[2px]" on><Center /></Cell>
        <Cell c="w-[24px]"><Quad /></Cell>
        <Cell c="w-[23px] ml-[3px]" on><Cross /></Cell>
        <Cell c="w-[23px] ml-px" on><Tan /></Cell>
        <Cell c="w-[24px] ml-[2px]"><Surf /></Cell>
        <Cell c="w-[24px]"><Grid3 /></Cell>
        <Sep c="ml-[7px]" />
        <Sel c="w-[49px] ml-[12px]" t="1" />
        <Cell c="w-[24px] ml-[4px]"><Fit /></Cell>
        <Cell c="w-[24px] ml-px"><Pan /></Cell>
        <Cell c="w-[24px] ml-px"><Rotate /></Cell>
        <Cell c="w-[24px] ml-[2px]"><Views /></Cell>
        <Cell c="w-[12px]"><Arrow /></Cell>
        <Cell c="w-[22px]"><Shade /></Cell>
        <Cell c="w-[16px]"><Arrow /></Cell>
        <Cell c="w-[24px]"><Cube /></Cell>
        <Cell c="w-[12px]"><Arrow /></Cell>
        <Cell c="w-[24px]"><Diamonds s={20} /></Cell>
        <Cell c="w-[12px]"><Arrow /></Cell>
        <Sep c="ml-[7px]" />
        <Cell c="w-[24px] ml-[8px]"><Triad /></Cell>
        <Cell c="w-[12px]"><Arrow /></Cell>
        <Cell c="w-[24px] ml-px"><Band /></Cell>
        <Cell c="w-[24px]"><Palette /></Cell>
        <Cell c="w-[24px] ml-[2px]"><Measure /></Cell>
        <Cell c="w-[12px]"><Arrow /></Cell>
        <Cell c="w-[24px]"><Ruler /></Cell>
        <Sep c="ml-[7px]" />
        <div className="ml-auto mr-[6px] mt-[10px]"><Arrow /></div>
      </div>

      {/* main */}
      <div className="h-[658px] shrink-0 flex">
        <div className="w-[32px] shrink-0 bg-[#dcdcdc] border-r border-[#9a9a9a] flex flex-col items-center">
          <div className="h-[26px] flex items-center"><Gear /></div>
          <div className="h-[32px] mt-[21px] flex items-center"><AsmTree /></div>
          <div className="h-[32px] mt-[10px] flex items-center"><Constr /></div>
          <div className="h-[44px] mt-[4px] w-[30px] self-end bg-white border border-r-0 border-[#c4c4c4] flex items-center justify-center mr-[-1px]"><PartN /></div>
          <div className="h-[32px] mt-[4px] flex items-center"><Books /></div>
          <div className="h-[32px] mt-[24px] flex items-center"><Info /></div>
          <div className="h-[32px] mt-[21px] flex items-center"><Doc /></div>
          <div className="h-[32px] mt-[21px] flex items-center"><Clock /></div>
          <div className="h-[32px] mt-[11px] flex items-center"><Rainbow /></div>
          <div className="h-[32px] mt-[10px] flex items-center"><Bars /></div>
          <div className="h-[32px] mt-[9px] flex items-center"><Tools /></div>
          <div className="h-[32px] mt-[10px] flex items-center"><Door /></div>
        </div>

        <div className="w-[245px] shrink-0 bg-white border-r border-[#9a9a9a] flex flex-col pl-[7px] pr-[9px]">
          <div className="h-[30px] shrink-0 pl-[3px] flex items-center text-[12px] leading-none text-[#333]">部件导航器</div>
          <div className="h-[544px] shrink-0 border border-[#d4d4d4] flex flex-col">
            <div className="h-[20px] shrink-0 bg-[#f0f0f0] border-b border-[#ddd] flex items-center pl-[6px] text-[12px] leading-none text-[#333]">
              <span>名称</span>
              <svg width="9" height="5" viewBox="0 0 9 5" className="ml-[18px] block"><path d="M0 5h9L4.500 0z" fill="#222" /></svg>
            </div>
            {rows.map((r, n) => <TreeRow key={n} r={r} n={n} />)}
            <div className="mt-auto mb-[2px] h-[15px] mx-px bg-[#f0f0f0] flex items-center justify-between px-[4px] relative shrink-0">
              <svg width="6" height="9" viewBox="0 0 6 9" className="block"><path d="M5 1L1 4.500 5 8" stroke="#333" strokeWidth="1.600" fill="none" /></svg>
              <div className="absolute left-[16px] w-[114px] h-[15px] bg-[#c8c8c8]" />
              <svg width="6" height="9" viewBox="0 0 6 9" className="block"><path d="M1 1l4 3.500L1 8" stroke="#333" strokeWidth="1.600" fill="none" /></svg>
            </div>
          </div>
          <div className="h-[5px] mt-px shrink-0 bg-[#eeeeee] border border-[#b8b8b8]" />
          {["相依性", "细节", "预览"].map((t, i) => (
            <div key={t} className="h-[24px] pt-[3px] shrink-0 border-b-2 border-[#cfcfcf] flex items-center justify-between pl-[6px] pr-[6px] text-[14px] leading-none text-[#3a9ad0]">
              <span>{t}</span>
              {i === 2 && <svg width="12" height="9" viewBox="0 0 12 9" className="block"><path d="M1 1l5 6.500L11 1" stroke="#2a90c8" strokeWidth="2" fill="none" /></svg>}
            </div>
          ))}
        </div>

        <div className="flex-1 min-w-0 bg-gradient-to-b from-[#b7b8ba] to-[#ededee]">
          <Model />
        </div>
      </div>

      {/* status */}
      <div className="h-[22px] pb-[2px] shrink-0 border-t border-[#c0c0c0] flex items-center pl-[3px] pr-[55px] text-[11px] leading-none tracking-[0.1px] text-[#111] font-medium whitespace-nowrap">
        <span>选择对象并使用 MB3，或者双击某一对象</span>
        <div className="ml-auto mr-[5px] w-[16px] h-[15px] bg-[#ccc] flex items-center justify-center"><svg width="12" height="12" viewBox="0 0 12 12" className="block"><path d="M1 3l5 8 5-9M3 2l3 5 4-3" stroke="#999" fill="none" /></svg></div>
        <FullWin />
      </div>

      {/* taskbar */}
      <div className="h-[40px] shrink-0 bg-black flex items-stretch text-white">
        <div className="w-[48px] shrink-0 flex items-center justify-center">
          <svg width="16" height="16" viewBox="0 0 16 16" className="block"><path d="M0 2.300l6.500-.9v6.300H0zM7.300 1.300L16 0v7.700H7.300zM0 8.500h6.500v6.300L0 13.900zM7.300 8.500H16V16l-8.700-1.200z" fill="#fff" /></svg>
        </div>
        <div className="w-[344px] shrink-0 bg-[#333333] flex items-center pl-[9px] text-[14.500px] leading-none text-[#a0a0a0]">搜索 Web 和 Windows</div>
        <div className="w-[49px] shrink-0 flex items-center justify-center">
          <svg width="20" height="14" viewBox="0 0 20 14" className="block"><path d="M5 1h10v12H5z" fill="none" stroke="#fff" /><path d="M2 3H.5v8H2M18 3h1.500v8H18" fill="none" stroke="#fff" /></svg>
        </div>
        <div className="w-[48px] shrink-0 flex items-center justify-center">
          <svg width="22" height="18" viewBox="0 0 22 18" className="block"><path d="M0 1h8l2 2h12v15H0z" fill="#f6d36c" /><path d="M0 5h22v3H0z" fill="#fbe7a8" /><path d="M6 12h10v6h-3v-3H9v3H6z" fill="#2aa6e8" /></svg>
        </div>
        <div className="w-[40px] ml-[6px] shrink-0 flex items-center justify-center border-b-[3px] border-[#76b9ed]">
          <div className="w-[22px] h-[22px] rounded-full bg-[#1a86dc] border-2 border-white flex items-center justify-center text-[12px] font-bold leading-none [font-family:'Liberation_Sans',sans-serif]">K</div>
        </div>
        <div className="w-[40px] ml-[9px] shrink-0 flex items-center justify-center border-b-[3px] border-[#76b9ed]">
          <svg width="24" height="24" viewBox="0 0 24 24" className="block"><circle cx="12" cy="12" r="12" fill="#e8761a" /><path d="M5 13q3-6 8-6l5-2-1 4q1 3-2 5l-4 1-2 3-1-3z" fill="#fbe8d0" /></svg>
        </div>
        <div className="w-[48px] ml-[5px] shrink-0 bg-[#333333] flex items-center justify-center border-b-[3px] border-[#76b9ed]">
          <svg width="26" height="24" viewBox="0 0 26 24" className="block"><circle cx="14" cy="12" r="9" fill="#2a8ad8" /><path d="M5 12q6 3 12-3l2 3q-5 5-11 3z" fill="#30b068" /><path d="M2 20q12 2 22-14 1 9-9 14-7 3-13 0z" fill="#f0b020" /><path d="M4 2l11 2-7 7z" fill="#e02040" /></svg>
        </div>
        <div className="ml-auto flex items-center pr-[6px]">
          <div className="w-[24px] flex justify-center"><svg width="12" height="7" viewBox="0 0 12 7" className="block"><path d="M1 6l5-5 5 5" stroke="#fff" strokeWidth="1.200" fill="none" /></svg></div>
          <div className="w-[24px] flex justify-center"><svg width="16" height="15" viewBox="0 0 16 15" className="block"><path d="M1 1h4v4H1zM3 5v5h12V2H5M8 10v4M4 14h8" stroke="#fff" fill="none" /></svg></div>
          <div className="w-[23px] flex justify-center"><svg width="16" height="14" viewBox="0 0 16 14" className="block"><path d="M1 5h2l3-3v10L3 9H1zM9 4q2 3 0 6M11 3q3 4 0 8" stroke="#ddd" fill="none" /></svg></div>
          <div className="w-[26px] flex justify-center"><svg width="16" height="16" viewBox="0 0 16 16" className="block"><path d="M1 1h14v10h-5l-2 3-2-3H1z" fill="#fff" /><path d="M4 4h8M4 6h8M4 8h6" stroke="#000" /></svg></div>
          <div className="w-[20px] text-center text-[13px] leading-none">英</div>
          <div className="w-[38px] flex justify-center"><div className="w-[14px] h-[14px] bg-white text-black text-[12px] font-bold leading-[14px] text-center [font-family:'Liberation_Sans',sans-serif]">M</div></div>
          <div className="w-[73px] text-center text-[12px] leading-[17px] whitespace-nowrap"><div>17:52</div><div>2016/1/2</div></div>
        </div>
      </div>

      {/* tooltip */}
      <div className="absolute left-[121px] top-[177px] w-[196px] h-[57px] bg-white border border-[#b0b0b0] shadow-[2px_2px_3px_rgba(0,0,0,0.35)] pl-[7px] text-[12px] leading-none text-[#333]">
        <div className="mt-[9px]">类型过滤器</div>
        <div className="mt-[12px] whitespace-nowrap text-[11.600px]">将选择范围过滤至特定对象类型。</div>
      </div>

      {/* watermark */}
      <div className="absolute left-[188px] top-[764px] text-[27.500px] leading-[36px] whitespace-nowrap text-[#bdf6ff] font-bold [-webkit-text-stroke:1px_#2b4a5a] [filter:drop-shadow(1px_1px_0_#1a6a90)] [font-family:'Noto_Sans_CJK_SC',sans-serif]">听音乐，找酷狗</div>
    </div>
  );
}
